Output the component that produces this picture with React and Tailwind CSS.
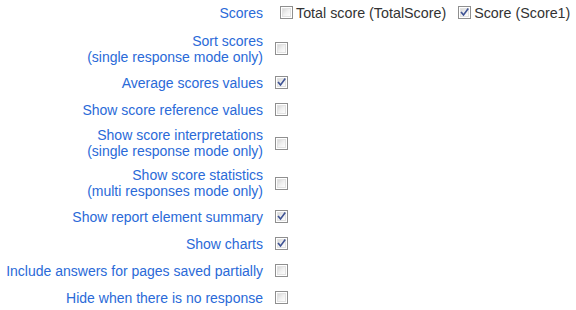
import React from "react";

function Box({ checked }) {
  return (
    <span className="inline-flex w-[13px] h-[13px] shrink-0 border border-[#8f8f8f] bg-white p-px">
      <span className="relative flex-1 bg-gradient-to-br from-[#d8d8d8] via-[#f0f0f0] to-[#fdfdfd] border border-[#e2e2e2]">
        {checked && (
          <svg viewBox="0 0 9 9" className="absolute -left-px -top-px w-[9px] h-[9px]">
            <path d="M1.5 4.5 L3.5 7 L7.8 1.2" fill="none" stroke="#3f5394" strokeWidth="1.6" strokeLinecap="square" />
          </svg>
        )}
      </span>
    </span>
  );
}

const rows = [
  { lines: ["Sort scores", "(single response mode only)"], h: "h-[41px]", c: false },
  { lines: ["Average scores values"], h: "h-[27px]", c: true },
  { lines: ["Show score reference values"], h: "h-[27px]", c: false },
  { lines: ["Show score interpretations", "(single response mode only)"], h: "h-[40px]", c: false },
  { lines: ["Show score statistics", "(multi responses mode only)"], h: "h-[40px]", c: false },
  { lines: ["Show report element summary"], h: "h-[27px]", c: true },
  { lines: ["Show charts"], h: "h-[27px]", c: true },
  { lines: ["Include answers for pages saved partially"], h: "h-[27px]", c: false },
  { lines: ["Hide when there is no response"], h: "h-[27px]", c: false },
];

export default function App() {
  return (
    <div className="w-[576px] h-[310px] bg-white overflow-hidden text-[14px] leading-[16px] font-['Liberation_Sans',Arial,sans-serif]">
      <div className="flex items-center h-[25px] mb-[3px]">
        <div className="w-[263px] shrink-0 text-right text-[#2a6ad8]">Scores</div>
        <div className="flex items-center ml-[17px] text-[#333] text-[14.3px] whitespace-nowrap">
          <Box checked={false} />
          <span className="ml-[3px]">Total score (TotalScore)</span>
          <span className="ml-[12px] flex"><Box checked={true} /></span>
          <span className="ml-[3px]">Score (Score1)</span>
        </div>
      </div>
      {rows.map((r, i) => (
        <div key={i} className={`flex items-center ${r.h}`}>
          <div className="w-[263px] shrink-0 text-right text-[#2a6ad8] whitespace-nowrap">
            {r.lines.map((l, j) => (
              <div key={j}>{l}</div>
            ))}
          </div>
          <div className="ml-[12px] flex">
            <Box checked={r.c} />
          </div>
        </div>
      ))}
    </div>
  );
}
